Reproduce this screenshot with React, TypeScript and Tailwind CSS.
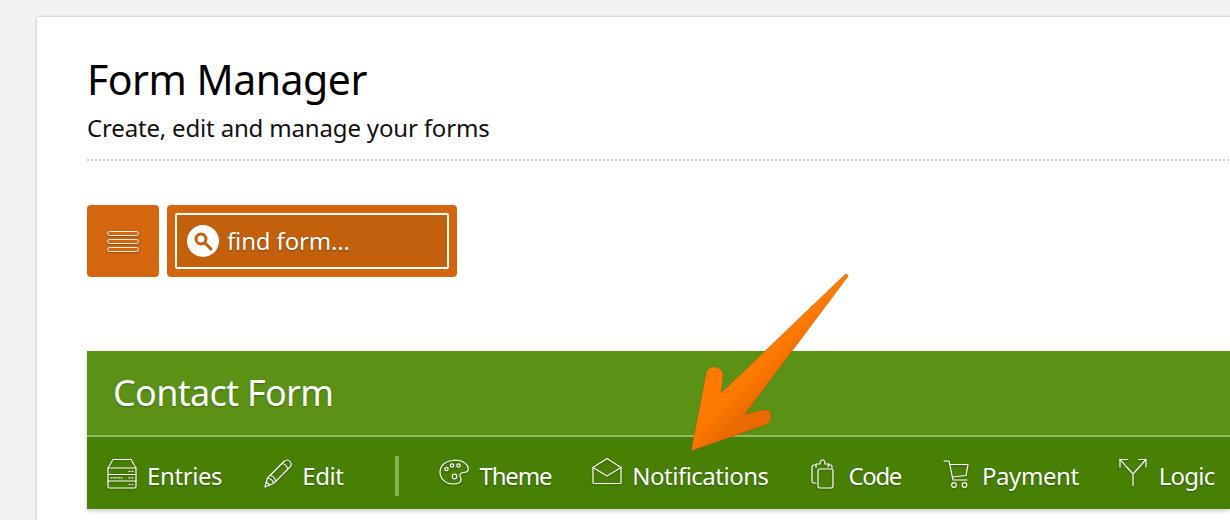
import React from "react";

function I({ children, w = 32, h = 32, cls = "" }: { children: React.ReactNode; w?: number; h?: number; cls?: string }) {
  return (
    <svg width={w} height={h} viewBox={`0 0 ${w} ${h}`} fill="none" stroke="white" strokeWidth="1.2" strokeLinejoin="round" strokeLinecap="round" className={"shrink-0 drop-shadow-[0_1px_1px_rgba(0,0,0,0.3)] " + cls}>
      {children}
    </svg>
  );
}

const Entries = () => (
  <I w={30} h={31} cls="-translate-y-[3px]">
    <path d="M1 10 6 1.500h18l5 8.500v18.500a1.500 1.500 0 0 1-1.500 1.500h-25A1.500 1.500 0 0 1 1 28.500Z" />
    <path d="M1 10h28M1 16.500h28M1 23h28" />
    <path d="M22 13.300h1M25 13.300h1M4 19.800h11M22 19.800h1M25 19.800h1M22 26.500h1M25 26.500h1" strokeDasharray="1 1.500" />
  </I>
);
const Edit = () => (
  <I w={30} h={31} cls="-translate-y-[3px]">
    <path d="M2 29l2.500-9L21 3.500c2-2 4.500-2 6 0s1.700 4 0 5.500L10.500 25.500Z" />
    <path d="M4.500 20c3 .5 5.500 2.500 6 5.500M7 17.500c3 .5 5 2.500 5.500 5.500M19 5.500c3 .5 5 2.500 5.500 5.500" />
    <path d="M3.300 24.500c1.500.2 2.700 1.300 3 3" />
  </I>
);
const Theme = () => (
  <I w={32} h={27} cls="-translate-y-[4px]">
    <path d="M15 1.500C7 1.500 1 6.500 1 13c0 7 6 12 13 12 4 0 8-1 8-4.500 0-2.500-1.500-2.500-1-5 .5-3 7-1 8-4 .8-3-.5-5.500-3-7.500-3-2-6-3-11-3Z" />
    <circle cx="7.500" cy="10" r="1.700" />
    <circle cx="13" cy="6.500" r="1.700" />
    <circle cx="19.500" cy="6.500" r="1.700" />
    <circle cx="15.500" cy="17.500" r="2.300" />
  </I>
);
const Mail = () => (
  <I w={30} h={28} cls="-translate-y-[5px]">
    <path d="M1 10.500 15 1.500l14 9v15a1 1 0 0 1-1 1H2a1 1 0 0 1-1-1Z" />
    <path d="M1 10.500 15 19l14-8.500" />
  </I>
);
const Code = () => (
  <I w={24} h={32} cls="-translate-y-[3px]">
    <path d="M5 8H3a2 2 0 0 0-2 2v14a2 2 0 0 0 2 2h2" />
    <path d="M17 8h3a2 2 0 0 1 1 1.500V11" />
    <path d="M5 10.500V7h4c0-2 1-4 2.500-4S14 5 14 7h4l-1 3" />
    <path d="M9 12h11a2 2 0 0 1 2 2v15a2 2 0 0 1-2 2H9a2 2 0 0 1-2-2V14a2 2 0 0 1 2-2Z" />
  </I>
);
const Cart = () => (
  <I w={28} h={30} cls="-translate-y-[2px]">
    <path d="M1 2h5l4 19h14" />
    <path d="M6.500 5.500h18.500l-2 11-13 1.500" />
    <circle cx="11" cy="26" r="2.300" />
    <circle cx="21.500" cy="26" r="2.300" />
  </I>
);
const Logic = () => (
  <I w={30} h={30} cls="-translate-y-[4px]">
    <path d="M15 28.500V17L2 2.500M15 17 28 2.500" />
    <path d="M2 10V2.500h7.500M20.500 2.500H28V10" />
  </I>
);

function Item({ icon, label, cls = "", track = "tracking-[-0.4px]" }: { icon: React.ReactNode; label: string; cls?: string; track?: string }) {
  return (
    <div className={"flex shrink-0 items-center " + cls}>
      {icon}
      <span className={"text-[24px] leading-none text-white [text-shadow:0_1px_2px_rgba(0,0,0,0.35)] " + track}>{label}</span>
    </div>
  );
}

export default function App() {
  return (
    <div className="h-[520px] overflow-hidden bg-[#f0f3f2] pl-[37px] pt-[17px] font-['Noto_Sans',sans-serif]">
      <div className="relative h-[600px] w-[1300px] bg-white pl-[50px] pt-[36px] shadow-[0_0_3px_rgba(0,0,0,0.25)]">
        <h1 className="text-[41px] leading-[52px] tracking-[-0.5px] text-black">Form Manager</h1>
        <p className="mt-[5px] text-[24px] leading-[36px] tracking-[-0.17px] text-[#111]">Create, edit and manage your forms</p>
        <div className="mt-[13px] border-t-2 border-dotted border-[#d0d0d0]" />

        <div className="mt-[44px] flex gap-2">
          <div className="flex size-[72px] flex-col items-center justify-center gap-[3px] rounded-[4px] bg-[#d4660f]">
            {[0, 1, 2].map((i) => (
              <div key={i} className="h-[5px] w-[32px] rounded-full border-[1.5px] border-white/90 shadow-[0_1px_2px_rgba(0,0,0,0.3)]" />
            ))}
          </div>
          <div className="flex h-[72px] w-[290px] items-center rounded-[4px] bg-[#d4660f] p-2">
            <div className="flex h-[56px] w-full items-center rounded-[2px] border-2 border-white bg-[#c3600c] pl-[10px]">
              <div className="flex size-[32px] items-center justify-center rounded-full bg-white">
                <svg width="22" height="22" viewBox="0 0 22 22" fill="none" stroke="#c3600c" strokeLinecap="round">
                  <circle cx="9" cy="9" r="5" strokeWidth="3" />
                  <path d="M13 13l6 6" strokeWidth="3" />
                </svg>
              </div>
              <span className="ml-[8px] text-[24px] leading-none tracking-[-0.15px] text-white [text-shadow:0_1px_2px_rgba(0,0,0,0.35)]">find form...</span>
            </div>
          </div>
        </div>

        <div className="mt-[74px] w-[1143px] shadow-[0_2px_4px_rgba(0,0,0,0.2)]">
          <div className="flex h-[86px] items-center border-b-2 border-[#8fba62] bg-[#5b9216] pl-[26px]">
            <span className="text-[36px] leading-none tracking-[-0.7px] text-white [text-shadow:0_1px_2px_rgba(0,0,0,0.3)]">Contact Form</span>
          </div>
          <div className="flex h-[72px] items-center bg-[#478003] pl-[20px] pt-[6px]">
            <Item icon={<Entries />} label="Entries" cls="gap-[10px]" />
            <Item icon={<Edit />} label="Edit" cls="ml-[41px] gap-[9px]" />
            <div className="ml-[51px] h-[40px] w-[4px] shrink-0 bg-[#84b254]" />
            <Item icon={<Theme />} label="Theme" cls="ml-[40px] gap-[9px]" track="tracking-[-1.2px]" />
            <Item icon={<Mail />} label="Notifications" cls="ml-[41px] gap-[10px]" track="tracking-[-0.5px]" />
            <Item icon={<Code />} label="Code" cls="ml-[42px] gap-[14px]" track="tracking-[-1.4px]" />
            <Item icon={<Cart />} label="Payment" cls="ml-[42px] gap-[11px]" />
            <Item icon={<Logic />} label="Logic" cls="ml-[39px] gap-[11px]" track="tracking-[-0.8px]" />
          </div>
        </div>

        <svg className="absolute left-[640px] top-[243px] overflow-visible" width="220" height="200" viewBox="677 260 220 200">
          <defs>
            <linearGradient id="ag" x1="730" y1="395" x2="748" y2="413" gradientUnits="userSpaceOnUse">
              <stop offset="0" stopColor="#ff7a00" />
              <stop offset="1" stopColor="#e96a02" />
            </linearGradient>
          </defs>
          <path
            d="M845.500 274 C846.500 273.500 848.500 275 848 276.500 L745 414 L763 410 C768 409 771 412 771 416.500 C771.500 420 770 423 767 424.500 L691 451 L706 374 C707 369 710 367 714.500 367 C720 367.500 723 371 723 375 L721 393 Z"
            fill="url(#ag)"
            stroke="#4d3a10"
            strokeOpacity="0.35"
            strokeWidth="0.6"
          />
        </svg>
      </div>
    </div>
  );
}
